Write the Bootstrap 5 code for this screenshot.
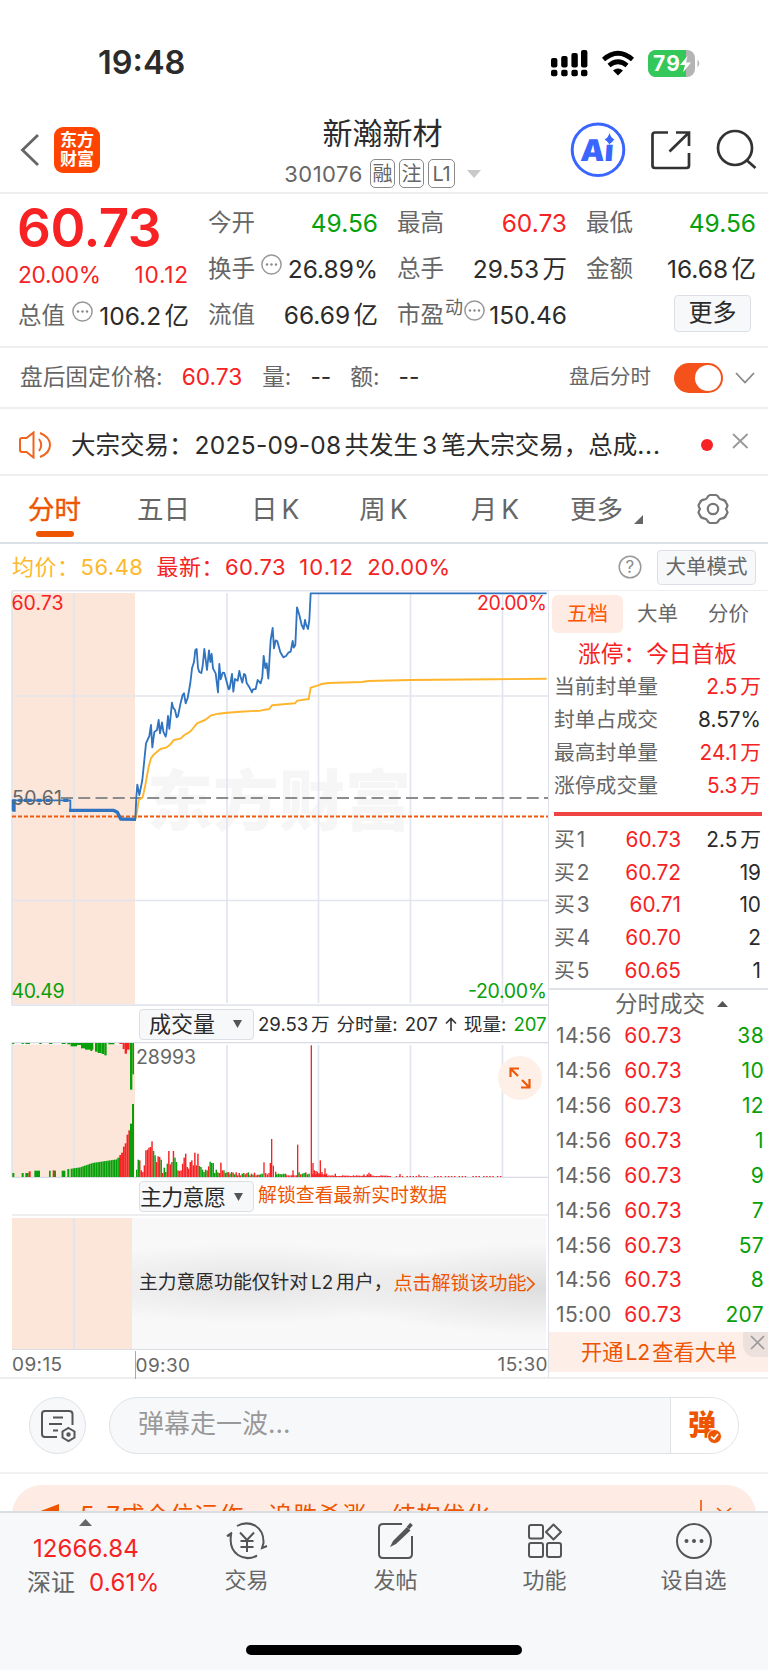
<!DOCTYPE html>
<html lang="zh-CN">
<head>
<meta charset="utf-8">
<meta name="viewport" content="width=device-width, initial-scale=1">
<title>新瀚新材 301076</title>
<link rel="stylesheet" href="https://cdn.jsdelivr.net/npm/bootstrap@5.3.0/dist/css/bootstrap.min.css">
<style>
:root{--up:#f62223;--down:#08a00a;--brand:#ee5500;--ink:#2b2b2b;--dim:#666;--rule:#eceef0;--soft:#f7f8fa}
html,body{margin:0;background:#fff}
body{width:768px;height:1670px;overflow:hidden;font-family:Inter,"Noto Sans CJK SC",sans-serif;color:var(--ink);line-height:1;font-size:24.5px}
svg{display:block;flex:none}
svg text{font-family:Inter,"Noto Sans CJK SC",sans-serif}
.t-up{color:var(--up)!important}.t-down{color:var(--down)!important}.t-brand{color:var(--brand)}.t-dim{color:var(--dim)!important}
.unit{margin-left:.14em}
.rule{border-bottom:2px solid var(--rule)}
.row-h{display:flex;align-items:center;white-space:nowrap}
.status{height:100px;padding:27px 67px 0 98px}
.clock{font-size:32.5px;font-weight:600;letter-spacing:0}
.head{height:94px;display:grid;grid-template-columns:230px 1fr 230px}
.logo{width:46px;height:46px;border-radius:9px;background:#ff4400;color:#fff;font-weight:700;font-size:17px;line-height:19px;text-align:center;padding-top:4px;margin-left:14px}
.name{font-size:30px;line-height:34px}
.chip{height:29px;border:1.5px solid #8a8a8a;border-radius:5px;font-size:20px;width:25px;display:flex;align-items:center;justify-content:center;letter-spacing:-.5px}
.quote{height:154px;display:grid;grid-template-columns:171px repeat(3,170px);column-gap:19px;padding:6px 0 0 18px}
.cell{display:flex;align-items:center;height:46px;white-space:nowrap}
.cell b{font-weight:400;margin-left:auto}
.lab{color:var(--dim);font-size:23.5px}
.big{font-size:53px;font-weight:600;height:61px;line-height:56px;letter-spacing:-.5px;margin-left:-1px}
.soft-btn{background:var(--soft);border:1.5px solid #dcdfe5;border-radius:4px;display:flex;flex:none;align-items:center;justify-content:center;color:var(--ink);white-space:nowrap}
.after{height:61px;padding-left:20px;font-size:22.7px}
.switch-on{width:49px;height:30px;border-radius:15px;background:#f4511b;padding:2px;display:flex;justify-content:flex-end}
.switch-on i{width:26px;height:26px;border-radius:50%;background:#fff}
.notice{height:67px;padding:7px 0 0 19px;font-size:24.5px}
.tabs{height:68px;border-bottom:2px solid #dbe1e7;font-size:26.5px;color:var(--dim)}
.tabs span{flex:none}
.tabs .on{color:var(--brand);-webkit-text-stroke:.4px var(--brand);position:relative}
.tabs .on::after{content:"";position:absolute;left:8px;width:38px;top:35px;height:6px;border-radius:3px;background:var(--brand)}
.legend-row{height:46px;padding:0 12px;font-size:22px;letter-spacing:.5px}
.main{height:789px;display:grid;grid-template-columns:549px 219px;border-bottom:2px solid var(--rule)}
.left{border-right:1.5px solid #dfe2ea}
.side{border-top:1.5px solid var(--rule)}
.strip{height:36px;padding-left:139px;font-size:18.6px}
.pick{width:115px;height:31px;font-size:22px;justify-content:flex-start}
.veil{height:136px;padding:2px 2px 0 0;margin-left:12px;border-top:2px solid var(--rule);border-bottom:1.5px solid #dadde4}
.veil-pre{width:120px;flex:none;background:linear-gradient(90deg,transparent 61px,#e1e4eb 61px,#e1e4eb 63px,transparent 63px),#fce5d9}
.veil-body{flex:1;font-size:18.8px;padding-left:7px;background:radial-gradient(ellipse 230px 40px at 120px 50%,#e4e4e4,transparent),radial-gradient(ellipse 220px 46px at 100% 54%,#dedede,transparent),#f8f8f8}
.axis{height:28px;font-size:19px;color:var(--dim);margin-left:12px;letter-spacing:.4px;padding-top:1px}
.axis .mid{margin-left:72px;border-left:1.5px solid #aaa;height:28px;line-height:29px}
.side-tabs{height:45px;font-size:20.5px;padding:1px 0 0 3px;color:var(--dim)}
.pill{width:71px;height:38px;border-radius:6px;background:#feece4;display:flex;align-items:center;justify-content:center;color:#ff5500}
.kv{height:32.9px;padding:0 7px 0 5px;font-size:20.8px;color:var(--dim)}
.kv b,.tick b{font-weight:400;margin-left:auto;color:var(--ink)}
.kv .p{width:127px;text-align:right;color:var(--up)}
.tick{height:34.85px;padding:0 4px 0 7px;font-size:21px;color:var(--dim);letter-spacing:.35px}
.tick .p{width:126px;text-align:right;color:var(--up)}
.upsell{height:40px;background:#fdeee8;color:var(--brand);font-size:21.2px;padding-left:32px;position:relative}
.upsell .x{position:absolute;right:0;top:0;width:25px;height:25px;background:#ece1dd;border-bottom-left-radius:12px}
.chat{height:95px;padding:0 29px;border-bottom:2px solid #f1f2f4}
.round{width:57px;height:57px;border-radius:50%;background:var(--soft);border:1.5px solid #dfe2e6;display:flex;align-items:center;justify-content:center}
.say{width:630px;height:57px;border:1.5px solid #dfe2e6;border-radius:29px;background:var(--soft);margin-left:23px;overflow:hidden;display:flex}
.say-text{flex:1;line-height:51px;padding-left:28px;color:#999;font-size:26px}
.say-btn{width:68px;background:#fff;border-left:1.5px solid #dfe2e6;position:relative;padding:13px 0 0 17px;color:var(--brand);font-weight:900;font-size:28px}
.promo-wrap{height:37px;overflow:hidden;padding:11px 12px 0}
.promo{height:70px;border-radius:30px;background:#feece4;color:var(--brand);font-size:24px;letter-spacing:.65px;padding:0 24px 0 26px;align-items:flex-start}
.dock{height:160px;background:var(--soft);border-top:2px solid #d9dee2;position:relative}
.dock-item{width:149px;flex:none;text-align:center;font-size:22px;color:var(--dim)}
.dock-item svg{margin:9px auto 9px}
.homebar{position:absolute;left:246px;top:132px;width:276px;height:10px;border-radius:5px;background:#000}
</style>
</head>
<body>
<header>
<div class="status row-h justify-content-between">
  <span class="clock">19:48</span>
  <svg width="151" height="34" viewBox="0 0 151 34">
    <g fill="#000"><rect x="1" y="11" width="6.400" height="9.500" rx="2"/><rect x="11.200" y="9" width="6.400" height="11.500" rx="2"/><rect x="21.400" y="6" width="6.400" height="14.500" rx="2"/><rect x="31" y="3" width="6.400" height="17.500" rx="2"/><rect x="1" y="22.700" width="6.400" height="6.500" rx="2"/><rect x="11.200" y="22.700" width="6.400" height="6.500" rx="2"/><rect x="21.400" y="22.700" width="6.400" height="6.500" rx="2"/><rect x="31" y="22.700" width="6.400" height="6.500" rx="2"/></g>
    <g fill="none" stroke="#000" stroke-width="4.600"><path d="M53.500 12.500Q68 0 82.500 12.500"/><path d="M59 18.500Q68 11 77 18.500"/></g><path d="M63 23.500Q68 19.500 73 23.500L68 28.500Z"/>
    <rect x="98" y="3" width="47" height="27" rx="8" fill="#b4b4b4"/><path d="M106 3H136V30H106A8 8 0 0 1 98 22V11A8 8 0 0 1 106 3Z" fill="#34c759"/><path d="M147.500 12.500Q151 16.500 147.500 20.500Z" fill="#b4b4b4"/>
    <text x="103" y="24" font-size="21" font-weight="700" fill="#fff" textLength="27">79</text><path d="M137.500 9L130 18H135L133 25.500L141 15.500H136Z" fill="#fff"/>
  </svg>
</div>
<div class="head rule">
  <div class="row-h" style="padding:11px 0 4px 20px">
    <svg width="20" height="34" viewBox="0 0 20 34"><path d="M18 2L2.500 17L18 32" fill="none" stroke="#666" stroke-width="2.800"/></svg>
    <div class="logo">东方<br>财富</div>
  </div>
  <div class="d-flex flex-column align-items-center" style="padding:16px 3px 0 0">
    <div class="name">新瀚新材</div>
    <div class="row-h t-dim" style="font-size:22px;margin-top:9px"><span style="letter-spacing:.5px;margin-right:7px">301076</span><span class="chip me-1">融</span><span class="chip me-1">注</span><span class="chip" style="width:27px">L1</span><svg class="ms-2" width="18" height="8" viewBox="0 0 18 8"><path d="M4 0H18L11 8Z" fill="#c9c9c9"/></svg></div>
  </div>
  <svg width="230" height="92" viewBox="538 100 230 92">
    <circle cx="598" cy="149.800" r="25.800" fill="none" stroke="#3a66ff" stroke-width="3"/>
    <g transform="translate(580 161) skewX(-4)"><text font-size="30" font-weight="900" fill="#3a66ff" textLength="33" lengthAdjust="spacingAndGlyphs">Ai</text></g>
    <path d="M609.500 133Q611 138 614.500 139.500Q611 141 609.500 145Q608 141 604.500 139.500Q608 138 609.500 133Z" fill="#3a66ff"/>
    <g fill="none" stroke="#333" stroke-width="2.700"><path d="M668 132.500H655Q652.500 132.500 652.500 135V165.500Q652.500 168 655 168H686.500Q689 168 689 165.500V153"/><path d="M676 132.500H689V146M689 132.500L669.500 151.500"/><circle cx="735" cy="148" r="17"/><path d="M747 160.500L755.500 168"/></g>
  </svg>
</div>
</header>

<section class="quote rule">
  <div>
    <div class="big t-up">60.73</div>
    <div class="row-h t-up justify-content-between" style="height:28px;font-size:22.7px"><span style="letter-spacing:-.3px">20.00%</span><span style="letter-spacing:.8px">10.12</span></div>
    <div class="cell" style="margin-top:4px"><span class="lab">总值</span><svg style="margin:-9px 0 0 7px" width="21" height="21"><use href="#dots"/></svg><b>106.2<span class="unit">亿</span></b></div>
  </div>
  <div>
    <div class="cell"><span class="lab">今开</span><b class="t-down">49.56</b></div>
    <div class="cell"><span class="lab">换手</span><svg style="margin:-9px 0 0 6px" width="21" height="21"><use href="#dots"/></svg><b>26.89%</b></div>
    <div class="cell"><span class="lab">流值</span><b>66.69<span class="unit">亿</span></b></div>
  </div>
  <div>
    <div class="cell"><span class="lab">最高</span><b class="t-up">60.73</b></div>
    <div class="cell"><span class="lab">总手</span><b>29.53<span class="unit">万</span></b></div>
    <div class="cell"><span class="lab">市盈</span><span class="t-dim" style="font-size:18px;margin:-14px 0 0 1px">动</span><svg style="margin:-9px 0 0 1px" width="21" height="21"><use href="#dots"/></svg><b>150.46</b></div>
  </div>
  <div>
    <div class="cell"><span class="lab">最低</span><b class="t-down">49.56</b></div>
    <div class="cell"><span class="lab">金额</span><b>16.68<span class="unit">亿</span></b></div>
    <div class="cell"><span class="soft-btn ms-auto" style="width:77px;height:37px;margin-right:5px;margin-top:-4px;font-size:24px">更多</span></div>
  </div>
</section>
<svg width="0" height="0" class="position-absolute"><symbol id="dots" viewBox="0 0 21 21"><circle cx="10.500" cy="10.500" r="9.600" fill="none" stroke="#999" stroke-width="1.500"/><g fill="#888"><circle cx="6" cy="10.500" r="1.200"/><circle cx="10.500" cy="10.500" r="1.200"/><circle cx="15" cy="10.500" r="1.200"/></g></symbol></svg>

<section class="after row-h rule">
  <span class="t-dim">盘后固定价格:</span><span class="t-up" style="margin-left:19px">60.73</span>
  <span class="t-dim" style="margin-left:20px">量:</span><span style="margin-left:19px">--</span><span class="t-dim" style="margin-left:19px">额:</span><span style="margin-left:19px">--</span>
  <span class="t-dim ms-auto" style="font-size:20.500px">盘后分时</span><span class="switch-on" style="margin:0 12px 0 23px"><i></i></span>
  <svg width="20" height="12" viewBox="0 0 20 12" style="margin-right:13px"><path d="M1 1L10 10.500L19 1" fill="none" stroke="#888" stroke-width="1.800"/></svg>
</section>
<section class="notice row-h rule">
  <svg width="33" height="28" viewBox="0 0 33 28" fill="none" stroke="#f0641e" stroke-width="2"><path d="M14.500 1.500L7.500 7H3Q1 7 1 9V19Q1 21 3 21H7.500L14.500 26.500Z"/><path d="M20 8Q24.500 14 20 20M21 2Q31 6 31 14T21 26"/></svg>
  <span style="margin-left:19px;width:593px">大宗交易：<span style="letter-spacing:.3px;margin-left:1px">2025-09-08</span><span style="margin-left:3px">共发生</span><span style="margin:0 4px">3</span>笔大宗交易，总成<span style="letter-spacing:.8px">...</span></span>
  <svg width="50" height="28" viewBox="0 0 50 28" style="margin-left:35px"><circle cx="8" cy="14" r="6" fill="var(--up)"/><path d="M34 3L48.500 17M48.500 3L34 17" stroke="#999" stroke-width="1.800"/></svg>
</section>
<nav class="tabs row-h">
  <span class="on" style="margin-left:28px">分时</span><span style="margin-left:56px">五日</span><span style="margin-left:61px">日<span class="ms-1">K</span></span><span style="margin-left:60px">周<span class="ms-1">K</span></span><span style="margin-left:63px">月<span class="ms-1">K</span></span><span style="margin-left:51px">更多</span>
  <svg width="9" height="9" style="margin:20px 0 0 11px"><path d="M9 0V9H0Z" fill="#666"/></svg>
  <svg width="32" height="32" viewBox="0 0 32 32" style="margin-left:54px" fill="none" stroke="#777" stroke-width="2.200"><path d="M13 2H19Q21 2.500 22 5Q23 6.500 25 6.700Q28 7 29 9.500L30.500 12.500Q30 14.500 29 16Q30 17.500 30.500 19.500L29 22.500Q28 25 25 25.300Q23 25.500 22 27Q21 29.500 19 30H13Q11 29.500 10 27Q9 25.500 7 25.300Q4 25 3 22.500L1.500 19.500Q2 17.500 3 16Q2 14.500 1.500 12.500L3 9.500Q4 7 7 6.700Q9 6.500 10 5Q11 2.500 13 2Z"/><circle cx="16" cy="16" r="5.200"/></svg>
</nav>
<div class="legend-row row-h">
  <span style="color:#fdb82c">均价：<span style="margin-left:1px">56.48</span></span><span class="t-up" style="margin-left:13px">最新：<span style="margin-left:1px">60.73</span></span><span class="t-up" style="margin-left:13px;letter-spacing:1.2px">10.12</span><span class="t-up" style="margin-left:13px;letter-spacing:.2px">20.00%</span>
  <svg class="ms-auto" width="24" height="24" viewBox="0 0 24 24"><circle cx="12" cy="12" r="10.800" fill="none" stroke="#999" stroke-width="1.500"/><text x="12" y="18" font-size="17" text-anchor="middle" fill="#888">?</text></svg>
  <span class="soft-btn t-dim" style="width:99px;height:35px;font-size:20.500px;letter-spacing:0;margin-left:15px">大单模式</span>
</div>

<main class="main">
<div class="left">
  <svg width="548" height="416" viewBox="0 590 548 416">
    <rect x="12" y="593" width="123" height="411" fill="#fce5d9"/>
    <text x="147" y="825" textLength="264" font-size="66" font-weight="900" fill="#f6f6f7">东方财富</text>
    <g stroke="#e2e5ed" stroke-width="1.700"><path d="M74 593V1003M227 593V1003M318.500 593V1003M410.500 593V1003M502.500 593V1003M12 696H548M12 900.500H548M12 591V1005.500M12 590.700H548M12 1005.200H548"/></g>
    <path d="M61 798H548" stroke="#8c8c8c" stroke-width="1.800" stroke-dasharray="12 5.250"/>
    <path d="M12 816.500H548" stroke="#f25a0c" stroke-width="2" stroke-dasharray="4 2"/>
    <g transform="translate(0 580) scale(.33333)" fill="none" stroke-linejoin="round">
      <path stroke="#ffb52b" stroke-width="5.800" d="M408 715L416 660L428 652L436 615L446 560L453 535L460 525L481 507L498 503L510 494L522 480L543 475L553 465L566 458L575 450L591 430L615 420L634 406L655 401L682 398L720 395L780 392L808 387L816 376L850 373L885 370L892 362L926 357L932 323L955 316L965 312L985 309L1085 306L1105 303L1230 300L1480 298L1640 296"/>
      <path stroke="#3073bf" stroke-width="5.500" d="M38 692V661H211V691L340 692L352 697L362 716L406 718L409 650L412 614L418 645L427 600L438 490L448 468L453 435L457 502L463 456L471 450L476 420L480 460L486 427L490 455L497 470L499 461L504 408L508 447L516 368L519 382L525 390L530 412L534 408L541 373L548 345L552 340L557 370L563 354L571 309L576 265L582 246L586 210L590 207L594 264L598 276L604 279L608 258L613 207L621 270L627 211L631 246L635 222L639 265L647 280L654 337L658 252L662 298L668 278L673 279L686 328L689 325L696 282L700 335L705 297L713 302L718 273L722 292L727 308L732 282L736 285L740 309L750 325L756 337L759 328L767 327L773 300L782 310L787 290L791 228L796 264L800 250L805 296L812 180L818 144L822 205L827 181L832 184L841 217L850 232L858 228L865 218L872 215L878 183L881 203L886 195L891 82L898 105L905 135L911 147L915 120L918 133L924 147L928 120L932 40H1640"/>
      <path stroke="#3073bf" stroke-width="10" d="M42 695V658M55 661H65M72 661H95M110 661H125M138 661H150M190 661H205M207 691H340L352 697L362 717L408 718"/>
    </g>
    <g font-size="19.500"><text x="11.500" y="610" fill="#f62223" textLength="52">60.73</text><text x="12" y="804.500" fill="#666" textLength="50">50.61</text><text x="11.500" y="998" fill="#08a00a" textLength="53">40.49</text><text x="477" y="610" fill="#f62223" textLength="70">20.00%</text><text x="468" y="998" fill="#08a00a" textLength="79">-20.00%</text></g>
  </svg>
  <div class="strip row-h"><span class="soft-btn pick" style="padding-left:9px">成交量<svg width="9" height="8" style="margin-left:18px"><path d="M0 0H9L4.500 8Z" fill="#555"/></svg></span><span style="margin-left:4px">29.53<span class="unit">万</span></span><span style="margin-left:7px">分时量:</span><span style="margin-left:7px">207</span><svg width="12" height="14" viewBox="0 0 12 14" style="margin-left:7px"><path d="M6 14V1.500M1 6.500L6 1.500L11 6.500" fill="none" stroke="#333" stroke-width="1.600"/></svg><span style="margin-left:7px">现量:</span><span class="t-down" style="margin-left:7px">207</span></div>
  <svg id="volume" width="548" height="136" viewBox="0 1042 548 136">
    <rect x="12" y="1044.500" width="123" height="133" fill="#fce5d9"/>
    <g stroke="#e2e5ed" stroke-width="1.700"><path d="M74 1045V1177M227 1045V1177M318.500 1045V1177M410.500 1045V1177M502.500 1045V1177M12 1042V1178"/></g>
    <circle cx="520" cy="1078" r="22" fill="#feefe7"/>
    <g fill="none" stroke="#ee5a0c" stroke-width="2.200"><path d="M518 1076L510.500 1068.500M510.500 1077V1068.500H519M522 1080L529.500 1087.500M529.500 1079V1087.500H521"/></g>
    <path d="M12 1042.600H548M12 1177.400H548" stroke="#d9dce4" stroke-width="1.400"/>
    <text x="136" y="1063.500" font-size="19.500" fill="#666" textLength="60">28993</text>
  </svg>
  <div class="strip row-h" style="padding-top:1px"><span class="soft-btn pick" style="letter-spacing:-.7px">主力意愿<svg width="9" height="8" style="margin-left:9px"><path d="M0 0H9L4.500 8Z" fill="#555"/></svg></span><span class="t-brand" style="margin-left:4px;font-size:18.900px">解锁查看最新实时数据</span></div>
  <div class="veil d-flex"><div class="veil-pre"></div><div class="veil-body row-h">主力意愿功能仅针对<span style="margin:0 3px">L2</span>用户，<span class="t-brand" style="font-size:19px;margin-left:1px">点击解锁该功能</span><svg width="9" height="16" viewBox="0 0 9 16"><path d="M1 1L8 8L1 15" fill="none" stroke="#ee5500" stroke-width="1.700"/></svg></div></div>
  <div class="axis row-h"><span>09:15</span><span class="mid">09:30</span><span class="ms-auto">15:30</span></div>
</div>
<aside class="side">
  <div class="side-tabs row-h"><span class="pill">五档</span><span style="margin-left:14px">大单</span><span style="margin-left:30px">分价</span></div>
  <div class="t-up text-center" style="font-size:22.700px;height:35px;line-height:35px;white-space:nowrap;padding-right:2px">涨停：今日首板</div>
  <div class="kv row-h">当前封单量<b class="t-up">2.5<span class="unit">万</span></b></div>
  <div class="kv row-h">封单占成交<b>8.57%</b></div>
  <div class="kv row-h">最高封单量<b class="t-up">24.1<span class="unit">万</span></b></div>
  <div class="kv row-h">涨停成交量<b class="t-up">5.3<span class="unit">万</span></b></div>
  <div style="height:4px;margin:9px 6px 8px 5px;background:#ee4444"></div>
  <div id="bids"></div>
  <div class="row-h t-dim" style="height:30.500px;border-top:2px solid #dfe3e8;font-size:22.500px;padding-left:66px">分时成交<svg width="11" height="6" style="margin-left:12px"><path d="M0 6H11L5.500 0Z" fill="#555"/></svg></div>
  <div id="ticks"></div>
  <div class="upsell row-h">开通<span style="margin:0 2px">L2</span>查看大单<span class="x"><svg width="25" height="25"><path d="M8 4L21 17M21 4L8 17" stroke="#999" stroke-width="1.600"/></svg></span></div>
</aside>
</main>

<section class="chat row-h">
  <span class="round"><svg width="36" height="34" viewBox="0 0 36 34" fill="none" stroke="#555" stroke-width="2"><path d="M17 28H5Q2 28 2 25V5Q2 2 5 2H29Q32.500 2 32.500 5V16M13 8.500H23M9 15H22M13 21.500H18"/><path d="M28.500 19L34.500 22.500V28.500L28.500 32L22.500 28.500V22.500Z"/><circle cx="28.500" cy="25.500" r="1.200"/></svg></span>
  <div class="say"><div class="say-text">弹幕走一波...</div><div class="say-btn">弹<svg width="15" height="15" viewBox="0 0 15 15" style="position:absolute;left:36px;top:31px"><circle cx="7.500" cy="7.500" r="7" fill="#ee5500" stroke="#fff"/><path d="M4 7.500L7 10L11 5" fill="none" stroke="#fff" stroke-width="1.800"/></svg></div></div>
</section>
<div class="promo-wrap"><div class="promo row-h">
  <svg width="22" height="30" viewBox="0 0 22 30" style="margin-top:18px"><path d="M21 1V20L0 9Z" fill="#ee5500"/></svg>
  <span style="margin:19px 0 0 20px">5-7成仓位运作，追胜杀涨，结构优化</span>
  <svg class="ms-auto" width="34" height="40" viewBox="0 0 34 40" fill="none" stroke="#ee5500" stroke-width="1.600"><path d="M3 15V40M19 23L26 29L33 23"/></svg>
</div></div>
<footer class="dock">
  <div class="d-flex">
    <div class="t-up" style="width:172px;flex:none;padding-top:6px;white-space:nowrap">
      <svg width="13" height="7" style="margin-left:79px"><path d="M0 7H13L6.500 0Z" fill="#666"/></svg>
      <div style="margin:11px 0 0 33px;font-size:24px;letter-spacing:.1px">12666.84</div>
      <div style="margin:10px 0 0 27px;font-size:24px"><span class="t-dim">深证</span><span style="margin-left:14px;letter-spacing:.3px">0.61%</span></div>
    </div>
    <div class="dock-item"><svg width="42" height="38" viewBox="0 0 42 38" fill="none" stroke="#555" stroke-width="2"><path d="M11 4Q20-1 29 3.500Q38 9 37.500 21L36 26L41 24M31 33.500Q21 39 12 33Q3 27 5 13L1 14L6 10.500M14 10.500L21 18L28 10.500M14.500 19H27.500M14.500 25H27.500M21 18V30"/></svg>交易</div>
    <div class="dock-item"><svg width="38" height="38" viewBox="0 0 38 38" fill="none" stroke="#555" stroke-width="2"><path d="M25 2H6Q2 2 2 6V32Q2 36 6 36H31Q35 36 35 32V14"/><path d="M13 25L16 19L30 5L33.500 8.500L19 22Z" fill="#555" stroke="none"/><path d="M31 6L34.500 2" stroke="#555" stroke-width="3.500"/></svg>发帖</div>
    <div class="dock-item"><svg width="36" height="38" viewBox="0 0 36 38" fill="none" stroke="#555" stroke-width="2"><rect x="2" y="3" width="14" height="13.500" rx="2"/><rect x="2" y="21" width="14" height="14" rx="2"/><rect x="20" y="21" width="14" height="14" rx="2"/><path d="M26.500 2.500L34 10L26.500 17.500L19 10Z" stroke-linejoin="round"/></svg>功能</div>
    <div class="dock-item"><svg width="38" height="38" viewBox="0 0 38 38"><circle cx="19" cy="19" r="17" fill="none" stroke="#555" stroke-width="2"/><g fill="#555"><circle cx="11.500" cy="19" r="2"/><circle cx="19" cy="19" r="2"/><circle cx="26.500" cy="19" r="2"/></g></svg>设自选</div>
  </div>
  <div class="homebar"></div>
</footer>
<script src="https://cdn.jsdelivr.net/npm/bootstrap@5.3.0/dist/js/bootstrap.bundle.min.js"></script>
<script>
document.getElementById('bids').innerHTML=[['60.73','2.5<span class="unit">万</span>'],['60.72','19'],['60.71','10'],['60.70','2'],['60.65','1']]
 .map((r,i)=>`<div class="kv row-h"><span style="width:0">买<span style="margin-left:2px">${i+1}</span></span><span class="p">${r[0]}</span><b>${r[1]}</b></div>`).join('');
document.getElementById('ticks').innerHTML=[38,10,12,1,9,7,57,8,207]
 .map((v,i)=>`<div class="tick row-h"><span style="width:0">${i<8?'14:56':'15:00'}</span><span class="p">60.73</span><b class="t-down">${v}</b></div>`).join('');

/* volume bars, in thirds of a pixel: x, width, height, colour */
const R='#f62223',G='#08a00a',bars=[],svg=document.getElementById('volume');
const up=(x,w,h,c)=>bars.push(`<rect x="${x/3}" y="${1177-h/3}" width="${w/3}" height="${h/3}" fill="${c}"/>`);
const down=(x,w,h,c)=>bars.push(`<rect x="${x/3}" y="1043" width="${w/3}" height="${h/3}" fill="${c}"/>`);
[[37,6,12],[65,6,12],[76,10,12],[103,17,19],[147,5,19],[162,6,19],[185,11,19],[202,6,24]].forEach(b=>up(...b,G));
[[86,6,17],[158,5,20]].forEach(b=>up(...b,R));
for(let x=212;x<358;x+=5){const h=x<235?25+(x-212)*.15:x<275?28+(x-235)*.35:x<348?42+(x-275)*.15:58;up(x,4.700,h,G)}
[66,73,91,101,127,140].forEach((h,i)=>up(358+i*5.400,5.400,h,R));
up(390,7,160,G);up(396,6,219,G);
[[37,6,3],[65,6,3],[76,14,3],[118,7,3],[147,10,3],[185,12,3],[202,10,4],[212,19,10],[231,12,6],[243,12,16],[255,25,20],[271,6,24],[285,8,26],[293,12,30],[305,8,33],[313,7,37],[325,18,4],[390,7,140],[397,5,94]].forEach(b=>down(...b,G));
[[358,10,3],[368,6,18],[374,7,32],[381,8,20]].forEach(b=>down(...b,R));
'22g 52g 50r 20r 15r 35r 80r 82r 88r 90r 107r 78g 65g 45r 62r 60r 52g 12r 28g 15r 40g 78r 38r 45g 78r 58g 45g 20r 18r 20r 40r 58r 70r 30r 25r 45r 50r 35r 73r 35r 70r 33g 30g 22g 15g 22r 20g 32r 46g 42g 42g 12g 22g 14r 12g 43r 20r 20g 12r 14g 15r 10g 15g 13r 8g 14r 5g 12r 5r 10g 12r 8g 12r 14g 5r 10r 7g 13r 5r 7g 7r 8g 10g'.split(' ')
 .forEach((s,i)=>up(408+i*4.590,4.400,parseInt(s),s.endsWith('r')?R:G));
[[790,44],[795,12],[800,8],[805,12],[809,42],[813,114],[818,34],[825,16],[855,10],[877,20],[891,97],[932,395],[937,42],[941,20],[946,18],[950,16],[955,12],[959,50],[964,15],[973,26],[978,10],[1004,10],[1090,8],[1100,8],[1105,13],[1110,9],[1198,9],[1255,7]].forEach(([x,h])=>up(x,4,h,R));
for(let x=828;x<855;x+=5)up(x,4.500,8+x%3,G);
for(let x=858;x<890;x+=5)up(x,4,5,R);
for(let x=895;x<930;x+=5)up(x,4.500,8+x%4*2,x%3?G:R);
for(let x=935;x<980;x+=5)up(x,5,8,R);
for(let x=980;x<1505;x+=4.600){const n=Math.round(x*7)%5;if(x<1170||n>2)up(x,4.600,x<1170?3+n%3:3,R)}
svg.insertAdjacentHTML('beforeend','<g></g>');
svg.lastElementChild.innerHTML=bars.join('');
</script>
</body>
</html>
